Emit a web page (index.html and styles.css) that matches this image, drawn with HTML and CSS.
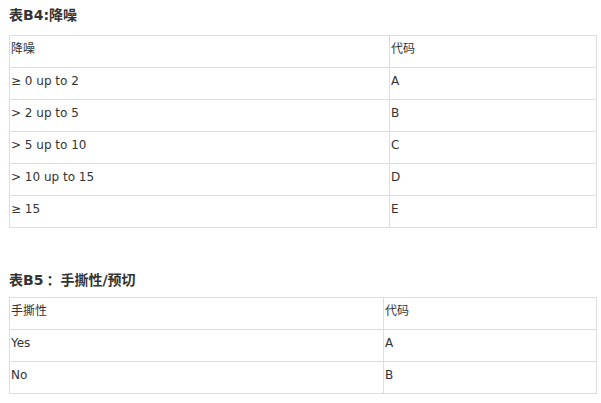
FILE: index.html
```html
<!DOCTYPE html>
<html lang="zh">
<head>
<meta charset="utf-8">
<link rel="stylesheet" href="styles.css">
</head>
<body>
<div class="page">
  <h3 class="caption">表B4:降噪</h3>
  <table class="grid grid-b4">
    <tr><td class="c1">降噪</td><td>代码</td></tr>
    <tr><td class="c1">≥ 0 up to 2</td><td>A</td></tr>
    <tr><td class="c1">&gt; 2 up to 5</td><td>B</td></tr>
    <tr><td class="c1">&gt; 5 up to 10</td><td>C</td></tr>
    <tr><td class="c1">&gt; 10 up to 15</td><td>D</td></tr>
    <tr><td class="c1">≥ 15</td><td>E</td></tr>
  </table>
  <h3 class="caption caption-b5">表B5<span class="fw-colon">：</span>手撕性/预切</h3>
  <table class="grid grid-b5">
    <tr><td class="c1">手撕性</td><td>代码</td></tr>
    <tr><td class="c1">Yes</td><td>A</td></tr>
    <tr><td class="c1">No</td><td>B</td></tr>
  </table>
</div>
</body>
</html>
```
FILE: styles.css
```css
html, body {
  margin: 0;
  padding: 0;
  background: #ffffff;
}
body {
  font-family: "DejaVu Sans", "Noto Sans CJK SC", sans-serif;
  color: #333333;
}
.page {
  padding: 5px 0 0 9px;
}
.caption {
  margin: 0;
  font-size: 14px;
  line-height: 20px;
  font-weight: bold;
  color: #333333;
  font-family: "DejaVu Sans", "Noto Sans CJK SC", sans-serif;
}
.fw-colon {
  padding-left: 3px;
}
.caption-b5 {
  margin-top: 42px;
}
.grid {
  border-collapse: collapse;
  width: 588px;
  margin-top: 10px;
  font-size: 12px;
}
.grid td {
  border: 1px solid #dddddd;
  padding: 4px 1px 9px 1px;
  line-height: 18px;
  vertical-align: top;
  color: #333333;
}
.grid-b4 .c1 { width: 377px; }
.grid-b5 .c1 { width: 371px; }
.caption-b5 + .grid { margin-top: 7px; }
```
